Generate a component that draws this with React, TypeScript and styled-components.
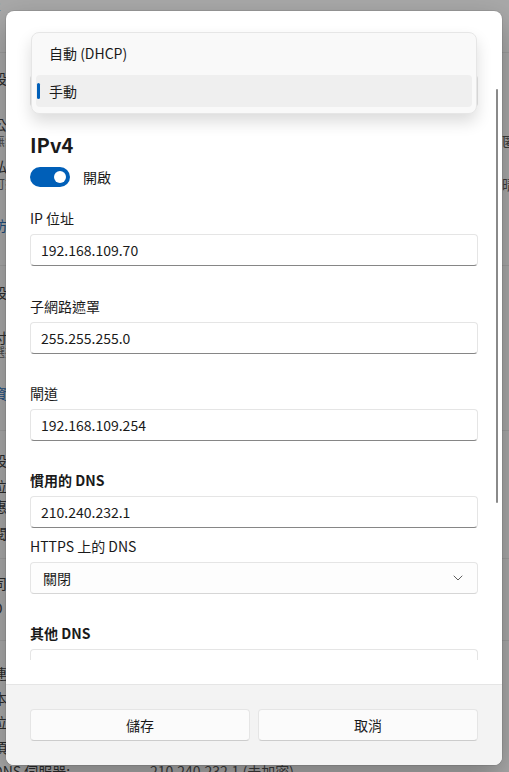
import React from "react";
import styled, { createGlobalStyle } from "styled-components";

const GlobalStyle = createGlobalStyle`
  html, body { margin: 0; padding: 0; }
  body {
    width: 509px;
    height: 772px;
    overflow: hidden;
    background: #a9a9a9;
    font-family: "Segoe UI", "Noto Sans CJK TC", sans-serif;
    font-size: 14px;
    color: #1a1a1a;
  }
  * { box-sizing: border-box; }
`;

const Page = styled.div`
  position: relative;
  width: 509px;
  height: 772px;
  overflow: hidden;
  background: #a9a9a9;
`;

const BgList = styled.div`
  display: flex;
  flex-direction: column;
`;

const BgRow = styled.div<{ $gap: number }>`
  display: grid;
  grid-template-columns: 150px 352px 1fr;
  align-items: center;
  flex-shrink: 0;
  height: 18px;
  line-height: 18px;
  margin-top: ${(p) => p.$gap}px;
  color: #2b2b2b;
`;

const BgLine = styled.div<{ $gap: number }>`
  flex-shrink: 0;
  height: 1px;
  margin-top: ${(p) => p.$gap}px;
  background: #9d9d9d;
`;

const BgText = styled.span<{ $blue?: boolean; $small?: boolean }>`
  margin-left: -7px;
  white-space: nowrap;
  font-size: ${(p) => (p.$small ? "12px" : "14px")};
  color: ${(p) => (p.$blue ? "#1d4d7e" : p.$small ? "#4a4a4a" : "#2b2b2b")};
`;

const BgValue = styled.span`
  white-space: nowrap;
  color: #3a3a3a;
`;

const Dialog = styled.div`
  position: absolute;
  left: 6px;
  top: 11px;
  width: 496px;
  height: 754px;
  border-radius: 8px;
  background: #ffffff;
  box-shadow: 0 12px 32px rgba(0, 0, 0, 0.28), 0 0 0 1px rgba(0, 0, 0, 0.08);
  display: flex;
  flex-direction: column;
  overflow: hidden;
`;

const Body = styled.div`
  position: relative;
  flex: 1;
  min-height: 0;
  padding: 0 24px 24px 24px;
  display: flex;
  flex-direction: column;
`;

const Viewport = styled.div`
  flex: 1;
  min-height: 0;
  overflow: hidden;
  display: flex;
  flex-direction: column;
  padding-top: 64px;
`;

const ScrollThumb = styled.div`
  position: absolute;
  right: 4px;
  top: 78px;
  width: 2px;
  height: 414px;
  border-radius: 1px;
  background: #8a8a8a;
`;

const Combo = styled.div`
  flex-shrink: 0;
  height: 32px;
  border: 1px solid #e5e5e5;
  border-bottom-color: #c8c8c8;
  border-radius: 4px;
  background: #fbfbfb;
  display: flex;
  align-items: center;
  padding: 0 12px;
`;

const Popup = styled.div`
  position: absolute;
  left: 25px;
  top: 21px;
  width: 446px;
  height: 82px;
  border-radius: 8px;
  background: #f9f9f9;
  border: 1px solid #e6e6e6;
  box-shadow: 0 8px 16px rgba(0, 0, 0, 0.14);
  padding: 4px 4px 6px 4px;
  display: flex;
  flex-direction: column;
  gap: 6px;
`;

const Option = styled.div<{ $selected?: boolean }>`
  position: relative;
  height: 32px;
  border-radius: 4px;
  display: flex;
  align-items: center;
  padding-left: 13px;
  background: ${(p) => (p.$selected ? "#efefef" : "transparent")};
`;

const Indicator = styled.span`
  position: absolute;
  left: 1px;
  top: 8px;
  width: 3px;
  height: 16px;
  border-radius: 2px;
  background: #005fb8;
`;

const Heading = styled.h2`
  flex-shrink: 0;
  margin: 24px 0 0 0;
  font-size: 20px;
  line-height: 28px;
  font-weight: 600;
  color: #1a1a1a;
`;

const ToggleRow = styled.div`
  flex-shrink: 0;
  display: flex;
  align-items: center;
  gap: 13px;
  margin-top: 8px;
  height: 20px;
`;

const Track = styled.div`
  width: 40px;
  height: 20px;
  border-radius: 10px;
  background: #005fb8;
  display: flex;
  align-items: center;
  justify-content: flex-end;
  padding-right: 4px;
`;

const Knob = styled.div`
  width: 12px;
  height: 12px;
  border-radius: 50%;
  background: #ffffff;
`;

const Label = styled.div<{ $gap: number; $strong?: boolean }>`
  flex-shrink: 0;
  margin-top: ${(p) => p.$gap}px;
  line-height: 20px;
  font-weight: ${(p) => (p.$strong ? 600 : 400)};
`;

const Field = styled.div`
  margin-top: 6px;
  flex-shrink: 0;
  height: 32px;
  border: 1px solid #e5e5e5;
  border-bottom-color: #868686;
  border-radius: 4px;
  background: #ffffff;
  display: flex;
  align-items: center;
  padding: 0 10px;
`;

const SelectBox = styled(Field)`
  border-bottom-color: #d6d6d6;
  background: #fdfdfd;
  padding: 0 14px 0 12px;
  justify-content: space-between;
`;

const Footer = styled.div`
  height: 81px;
  flex-shrink: 0;
  background: #f3f3f3;
  border-top: 1px solid #e5e5e5;
  padding: 24px;
  display: grid;
  grid-template-columns: 1fr 1fr;
  gap: 8px;
`;

const Button = styled.button`
  height: 32px;
  border: 1px solid #e5e5e5;
  border-bottom-color: #cccccc;
  border-radius: 4px;
  background: #fbfbfb;
  font-family: inherit;
  font-size: 14px;
  color: #1a1a1a;
`;

const Chevron = () => (
  <svg width="10" height="6" viewBox="0 0 10 6" fill="none">
    <path d="M1 1l4 4 4-4" stroke="#5f5f5f" strokeWidth="1" strokeLinecap="round" strokeLinejoin="round" />
  </svg>
);

type BgItem =
  | { kind: "line"; gap: number }
  | { kind: "row"; gap: number; l?: string; m?: string; r?: string; blue?: boolean; small?: boolean };

const bgItems: BgItem[] = [
  { kind: "row", gap: -4, l: "2" },
  { kind: "line", gap: 38 },
  { kind: "row", gap: 16, l: "設定" },
  { kind: "row", gap: 28, l: "公用網路" },
  { kind: "row", gap: -1, l: "無法探索", small: true, r: "匿" },
  { kind: "row", gap: 7, l: "私人網路" },
  { kind: "row", gap: 0, l: "可探索", small: true, r: "晴" },
  { kind: "row", gap: 23, l: "防火牆", blue: true },
  { kind: "line", gap: 31 },
  { kind: "row", gap: 17, l: "設定" },
  { kind: "row", gap: 27, l: "付費網路" },
  { kind: "row", gap: -3, l: "選擇", small: true },
  { kind: "row", gap: 23, l: "資料", blue: true },
  { kind: "line", gap: 28 },
  { kind: "row", gap: 20, l: "設定" },
  { kind: "row", gap: 8, l: "位址" },
  { kind: "row", gap: 2, l: "惠" },
  { kind: "row", gap: 9, l: "閱" },
  { kind: "line", gap: 16 },
  { kind: "row", gap: 15, l: "司" },
  { kind: "row", gap: 7, l: "D" },
  { kind: "line", gap: 23 },
  { kind: "row", gap: 23, l: "連" },
  { kind: "row", gap: 7, l: "本" },
  { kind: "row", gap: 6, l: "位" },
  { kind: "row", gap: 7, l: "頂" },
  { kind: "row", gap: 6, l: "DNS 伺服器:", m: "210.240.232.1 (未加密)" },
];

const fields = [
  { label: "IP 位址", value: "192.168.109.70", gap: 21 },
  { label: "子網路遮罩", value: "255.255.255.0", gap: 30 },
  { label: "閘道", value: "192.168.109.254", gap: 29 },
];

export default function App() {
  return (
    <>
      <GlobalStyle />
      <Page>
        <BgList>
          {bgItems.map((it, i) =>
            it.kind === "line" ? (
              <BgLine key={i} $gap={it.gap} />
            ) : (
              <BgRow key={i} $gap={it.gap}>
                <BgText $blue={it.blue} $small={it.small}>{it.l}</BgText>
                <BgValue>{it.m}</BgValue>
                <BgValue>{it.r}</BgValue>
              </BgRow>
            )
          )}
        </BgList>
        <Dialog>
          <Body>
            <Viewport>
              <Combo>手動</Combo>
              <Heading>IPv4</Heading>
              <ToggleRow>
                <Track>
                  <Knob />
                </Track>
                <span>開啟</span>
              </ToggleRow>
              {fields.map((f) => (
                <React.Fragment key={f.label}>
                  <Label $gap={f.gap}>{f.label}</Label>
                  <Field>{f.value}</Field>
                </React.Fragment>
              ))}
              <Label $gap={29} $strong>慣用的 DNS</Label>
              <Field>210.240.232.1</Field>
              <Label $gap={8}>HTTPS 上的 DNS</Label>
              <SelectBox>
                <span>關閉</span>
                <Chevron />
              </SelectBox>
              <Label $gap={29} $strong>其他 DNS</Label>
              <Field />
            </Viewport>
            <ScrollThumb />
            <Popup>
              <Option>自動 (DHCP)</Option>
              <Option $selected>
                <Indicator />
                手動
              </Option>
            </Popup>
          </Body>
          <Footer>
            <Button>儲存</Button>
            <Button>取消</Button>
          </Footer>
        </Dialog>
      </Page>
    </>
  );
}
